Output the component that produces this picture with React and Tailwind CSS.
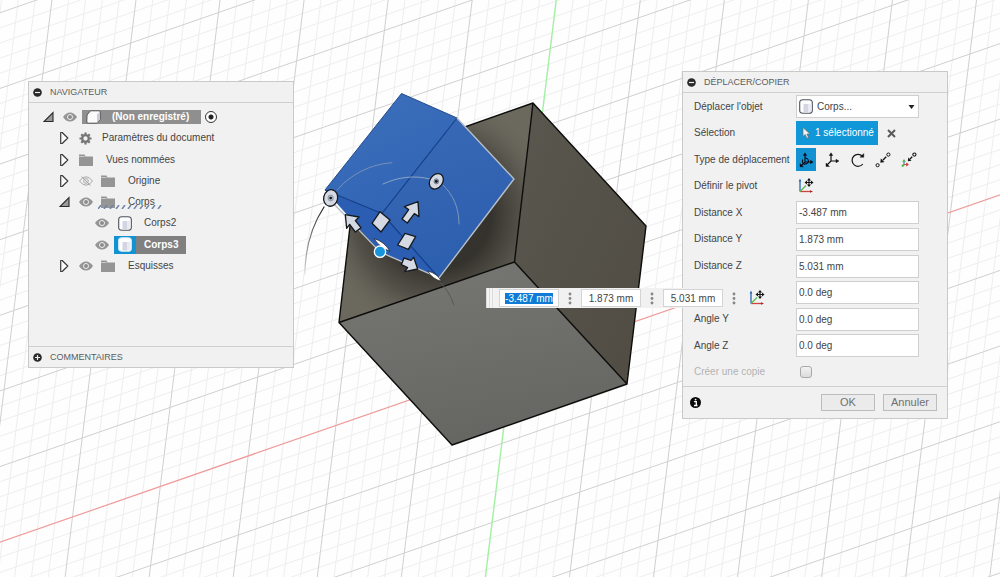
import { useEffect, useRef } from "react";

// Ground plane basis: one major grid cell along each axis, in scene units
const ORIGIN = [511.5, 364.5];
const U = [87.8, -30.5];
const V = [9.7, -79];
const REACH = 12;

const point = (u, v) => [
  ORIGIN[0] + u * U[0] + v * V[0],
  ORIGIN[1] + u * U[1] + v * V[1],
];

function gridPath(keep) {
  const parts = [];
  for (let n = -REACH * 5; n <= REACH * 5; n++) {
    if (!keep(n)) continue;
    const t = n / 5;
    parts.push(`M${point(t, -REACH)}L${point(t, REACH)}`);
    parts.push(`M${point(-REACH, t)}L${point(REACH, t)}`);
  }
  return parts.join("");
}

const minorGrid = gridPath((n) => n % 5 !== 0);
const majorGrid = gridPath((n) => n % 5 === 0 && n !== 0);

function Scene() {
  return (
    <svg
      className="absolute inset-0 h-full w-full"
      viewBox="0 0 1000 577"
      preserveAspectRatio="xMidYMid slice"
      aria-hidden="true"
    >
      <defs>
        <linearGradient id="front" x1="0" y1="0" x2="0.3" y2="1">
          <stop offset="0" stopColor="#777873" />
          <stop offset="1" stopColor="#666763" />
        </linearGradient>
        <linearGradient id="side" x1="0" y1="0" x2="1" y2="1">
          <stop offset="0" stopColor="#5a574e" />
          <stop offset="1" stopColor="#504c44" />
        </linearGradient>
        <linearGradient id="blueTop" x1="0" y1="0" x2="0.6" y2="1">
          <stop offset="0" stopColor="#3d70bb" />
          <stop offset="1" stopColor="#3164b4" />
        </linearGradient>
        <linearGradient id="blueSide" x1="0.3" y1="0" x2="0.6" y2="1">
          <stop offset="0" stopColor="#3869b5" />
          <stop offset="1" stopColor="#2c5eaf" />
        </linearGradient>
        <linearGradient id="fadeDown" x1="0" y1="0" x2="0" y2="1">
          <stop offset="0" stopColor="#222" />
          <stop offset="1" stopColor="#222" stopOpacity="0.1" />
        </linearGradient>
        <radialGradient id="shadow" gradientUnits="userSpaceOnUse" cx="437" cy="215" r="120">
          <stop offset="0.45" stopColor="#2b2924" stopOpacity="0.85" />
          <stop offset="0.7" stopColor="#3b3932" stopOpacity="0.5" />
          <stop offset="1" stopColor="#6b685e" stopOpacity="0" />
        </radialGradient>
      </defs>

      <rect width="1000" height="577" fill="#fefefe" />
      <path d={minorGrid} stroke="#eeeeee" strokeWidth="1" fill="none" />
      <path d={majorGrid} stroke="#d0d0d0" strokeWidth="1" fill="none" />
      <path d={`M${point(-REACH, 0)}L${point(REACH, 0)}`} stroke="#f09a9a" strokeWidth="1.2" />
      <path d={`M${point(0, -REACH)}L${point(0, REACH)}`} stroke="#a2f0a2" strokeWidth="1.4" />

      <path d="M533 103 514.5 262 339 322.5 357 165Z" fill="#6b685e" />
      <path d="M533 103 514.5 262 339 322.5 357 165Z" fill="url(#shadow)" />
      <path d="M533 103 646 226 627 384 514.5 262Z" fill="url(#side)" />
      <path d="M514.5 262 627 384 452 445 339 322.5Z" fill="url(#front)" />
      <path
        d="M357 165 533 103 646 226 627 384 452 445 339 322.5ZM514.5 262 533 103M514.5 262 627 384M514.5 262 339 322.5"
        fill="none"
        stroke="#0c0c0a"
        strokeWidth="1.4"
        strokeLinejoin="round"
      />

      <path d="M401.5 93.5 457 118 382 213.5 325 190Z" fill="url(#blueTop)" />
      <path d="M457 118 514 179 439 278 382 213.5Z" fill="url(#blueSide)" />
      <path d="M325 190 382 213.5 439 278 380 252Z" fill="#2b5eb2" />
      <path
        d="M457 118 382 213.5 439 278M382 213.5 325 190"
        fill="none"
        stroke="#143f8c"
        strokeWidth="1.2"
      />
      <path d="M457 118 401.5 93.5 325 190" fill="none" stroke="#234b8c" strokeWidth="1" />
      <path d="M457 118 514 179 439 278 380 252 333 203" fill="none" stroke="#b9bfc6" strokeWidth="1.4" />

      <g fill="none" strokeLinecap="round">
        <path d="M324 207C313 224 305 248 305 274" stroke="url(#fadeDown)" strokeWidth="1.2" />
        <path d="M337 190C350 175 370 164 392 162.7" stroke="#7791b8" strokeWidth="1" />
        <path d="M383 184C398 177 414 175 430 179" stroke="#8ba3c6" strokeWidth="1" />
        <path d="M443 185C453 195 459 207 459 224" stroke="#7d97bd" strokeWidth="1" />
        <path d="M441 283Q449 291 454 305" stroke="#575955" strokeWidth="1" />
      </g>

      <g
        transform="translate(300 85) scale(.33333)"
        fill="#d5d9e3"
        stroke="#16191f"
        strokeWidth="4"
        strokeLinejoin="round"
      >
        <ellipse cx="92" cy="339" rx="21" ry="25" transform="rotate(12 92 339)" />
        <ellipse cx="92" cy="339" rx="8" ry="9" fill="#aeb9c8" stroke="#77808c" strokeWidth="2" />
        <circle cx="92" cy="339" r="4" fill="#111" stroke="none" />
        <ellipse cx="409" cy="289" rx="19" ry="25" transform="rotate(35 409 289)" />
        <ellipse cx="409" cy="289" rx="7" ry="8" fill="#8594a9" stroke="#66707e" strokeWidth="2" />
        <circle cx="409" cy="289" r="4" fill="#111" stroke="none" />
        <path d="M136 389 177 396 166 407 183 428 166 441 149 418 140 430Z" />
        <path d="M354 350 357 395 343 386 322 414 306 402 326 374 313 365Z" />
        <path d="M353 552 314 560 323 548 304 539 312 519 333 526 341 517Z" />
        <path d="M240 380 270 405 243 441 216 415Z" />
        <path d="M315 445 347 455 325 493 293 480Z" />
        <path d="M222 461Q253 469 270 499Q240 488 222 461Z" fill="#fff" strokeWidth="2" />
        <path d="M383 558Q412 565 424 589Q397 582 383 558Z" fill="#fff" strokeWidth="2" />
        <circle cx="240" cy="500" r="17" fill="#1695dc" stroke="#fff" strokeWidth="4" />
      </g>
    </svg>
  );
}

function RoundIcon({ plus }) {
  return (
    <svg width="9" height="9" viewBox="0 0 9 9" aria-hidden="true">
      <circle cx="4.5" cy="4.5" r="4.3" fill="#2a2a2a" />
      <path d={plus ? "M2 4.5H7M4.5 2V7" : "M2 4.5H7"} stroke="#f2f2f2" strokeWidth="1.2" />
    </svg>
  );
}

function PanelHeader({ title, plus }) {
  return (
    <h2 className="flex h-5 items-center gap-2 text-[9px] text-[#5c5c5c]">
      <button type="button" aria-label={plus ? "Développer" : "Réduire"} className="ml-1">
        <RoundIcon plus={plus} />
      </button>
      {title}
    </h2>
  );
}

function Toggle({ open }) {
  return (
    <svg width="11" height="14" viewBox="0 0 11 14" aria-hidden="true">
      {open ? (
        <path d="M10 2.5V11.5H1Z" fill="#9a9a9a" stroke="#2b2b2b" strokeWidth="1.1" />
      ) : (
        <path
          d="M1.7 1.5V12.5H3.2L8.8 7 3.2 1.5Z"
          fill="#fafafa"
          stroke="#3a3a3a"
          strokeWidth="1.2"
          strokeLinejoin="round"
        />
      )}
    </svg>
  );
}

function Eye({ hidden }) {
  return (
    <svg width="14" height="10" viewBox="0 0 14 10" aria-hidden="true">
      {hidden ? (
        <g fill="none" stroke="#a6a6a6">
          <path d="M0.5 5Q3.5 0.8 7 0.8T13.5 5Q10.5 9.2 7 9.2T0.5 5Z" />
          <circle cx="7" cy="5" r="2.3" />
          <path d="M2.5 0.5 11.5 9.5" />
        </g>
      ) : (
        <g>
          <path d="M0 5Q3 0.5 7 0.5T14 5Q11 9.5 7 9.5T0 5Z" fill="#959595" />
          <circle cx="7" cy="5" r="2.5" fill="#8b8b8b" stroke="#efefef" strokeWidth="1" />
        </g>
      )}
    </svg>
  );
}

function Folder() {
  return (
    <svg width="14" height="12" viewBox="0 0 14 12" aria-hidden="true">
      <path d="M0 0.5H5.5L6.5 2.5H14V12H0Z" fill="#959595" />
      <path d="M0 2.5H5.5" stroke="#d6d6d6" strokeWidth="0.8" />
    </svg>
  );
}

function Gear() {
  return (
    <svg width="13" height="13" viewBox="-6.5 -6.5 13 13" aria-hidden="true">
      <circle r="3.3" fill="none" stroke="#757575" strokeWidth="2.3" />
      {[0, 45, 90, 135].map((angle) => (
        <path
          key={angle}
          d="M0-6V-4M0 4V6"
          stroke="#757575"
          strokeWidth="2.2"
          transform={`rotate(${angle})`}
        />
      ))}
    </svg>
  );
}

function BodyIcon({ outline = "#4c4f5c" }) {
  return (
    <svg width="14" height="15" viewBox="0 0 14 15" aria-hidden="true">
      <path
        d="M0.7 3.5Q0.7 0.7 4 0.7H10Q13.3 0.7 13.3 3.5V11.5Q13.3 14.3 10 14.3H4Q0.7 14.3 0.7 11.5Z"
        fill="#fdfdfd"
        stroke={outline}
        strokeWidth="1.1"
      />
      <path d="M4.5 5H9.5V13.5H4.5Z" fill="#d3d6e2" />
      <path d="M9.5 5H12.5V11.5Q12 13.5 9.5 13.5Z" fill="#e9ebf2" />
    </svg>
  );
}

function ComponentIcon() {
  return (
    <svg width="15" height="14" viewBox="0 0 15 14" aria-hidden="true">
      <path
        d="M1 5 4.5 0.8H13Q14.3 0.8 14.3 2V9.5L11 13.2H2.3Q0.8 13.2 0.8 12Z"
        fill="#fbfbfb"
        stroke="#54565c"
        strokeWidth="1"
      />
      <path d="M11 4.5 14 1.5V9.5L11 13Z" fill="#c9ccd5" />
    </svg>
  );
}

function PivotIcon() {
  return (
    <svg width="16" height="16" viewBox="0 0 16 16" fill="none" aria-hidden="true">
      <path d="M2 13.5V2" stroke="#2b67b4" strokeWidth="1.3" />
      <path d="M0.7 3.5 2 0.5 3.3 3.5Z" fill="#2b67b4" />
      <path d="M2 13.5H13" stroke="#d14343" strokeWidth="1.3" />
      <path d="M12 12.2 15 13.5 12 14.8Z" fill="#a92222" />
      <path d="M2 13.5 8 7.5" stroke="#58bb48" strokeWidth="1.3" />
      <path d="M7.5 4.5H14.5M11 1V8" stroke="#151515" strokeWidth="1.1" />
      <path
        d="M11 0 13 2.5H9ZM11 9 13 6.5H9ZM6.5 4.5 9 2.5V6.5ZM15.5 4.5 13 2.5V6.5Z"
        fill="#151515"
      />
    </svg>
  );
}

const moveIcons = {
  free: (
    <g stroke="#0b0b16" strokeWidth="1.1" fill="none">
      <path d="M7 10V3M7 10H13M7 10 3 14" />
      <path d="M5.2 3.5 7 0.8 8.8 3.5ZM12.5 8.2 15.2 10 12.5 11.8ZM2 11.5V14.8H5.3Z" fill="#0b0b16" strokeWidth="0.4" />
      <path d="M7 6Q10.5 6 10.5 10Q9 12.5 5.5 12" />
      <path d="M4.8 7.5Q4 9.5 4.8 11.5" />
    </g>
  ),
  translate: (
    <g stroke="#111" strokeWidth="1.2" fill="none">
      <path d="M7 9V3M7 9H13M7 9 3 13" />
      <path d="M5.2 3.5 7 0.8 8.8 3.5ZM12 7.2 15 9 12 10.8ZM2 11V14.5H5.5Z" fill="#111" strokeWidth="0.4" />
    </g>
  ),
  rotate: (
    <g fill="none" stroke="#161616" strokeWidth="1.2">
      <path d="M12.3 4A6 6 0 1 0 12.8 12" />
      <path d="M10 5.3H13.8V1.5Z" fill="#161616" strokeWidth="0.4" />
    </g>
  ),
  pointToPoint: (
    <g fill="none" stroke="#161616" strokeWidth="1">
      <circle cx="2.6" cy="13.2" r="1.6" />
      <circle cx="13.4" cy="2.6" r="1.6" />
      <path d="M11.2 4.8 8 8" strokeWidth="1.4" />
      <path d="M5.5 10.5 6 6.8 9.2 10Z" fill="#161616" strokeWidth="0.3" />
    </g>
  ),
  pointToPosition: (
    <g fill="none" strokeWidth="1.1">
      <circle cx="13.4" cy="2.6" r="1.6" stroke="#161616" />
      <path d="M11.2 4.8 9 7" stroke="#161616" strokeWidth="1.4" />
      <path d="M6.8 9.2 7.3 5.5 10.5 8.7Z" fill="#161616" />
      <path d="M3 12.5V9" stroke="#3b78c4" />
      <path d="M3 12.5H6.5M5.3 11 7 12.5 5.3 14" stroke="#d14343" />
      <path d="M3 12.5 1 14.5" stroke="#45b545" strokeWidth="1.8" />
      <path d="M1.8 10 3 8 4.2 10" stroke="#45b545" />
    </g>
  ),
};

const moveTypes = [
  { id: "free", label: "Déplacement libre" },
  { id: "translate", label: "Translation" },
  { id: "rotate", label: "Rotation" },
  { id: "pointToPoint", label: "Point à point" },
  { id: "pointToPosition", label: "Point à position" },
];

function TreeRow({ indent = "pl-[30px]", toggle, eye, children }) {
  return (
    <li className={`flex h-5 items-center ${indent}`}>
      {toggle && (
        <button type="button" aria-label="Afficher le contenu" className="mr-[9px]">
          <Toggle open={toggle === "open"} />
        </button>
      )}
      {eye && (
        <button type="button" aria-label="Visibilité">
          <Eye hidden={eye === "off"} />
        </button>
      )}
      {children}
    </li>
  );
}

function FolderLabel({ name, className = "ml-2" }) {
  return (
    <span className={`flex items-center gap-[13px] ${className}`}>
      <Folder />
      {name}
    </span>
  );
}

function Navigator() {
  return (
    <section className="mt-[10px] w-[266px] border border-[#c9c9c9] bg-[#f1f1f1]">
      <PanelHeader title="NAVIGATEUR" />
      <div className="min-h-[245px] border-y border-[#d0d0d0] pt-1">
        <ul className="flex min-h-[169px] flex-col justify-between">
          <TreeRow indent="pl-[14px]" toggle="open" eye="on">
            <span className="ml-[5px] flex h-[14px] items-center bg-[#8f8f8f] pr-3 font-bold text-white">
              <span className="flex w-[22px] justify-center">
                <ComponentIcon />
              </span>
              <span className="pl-2">(Non enregistré)</span>
            </span>
            <input
              type="radio"
              name="active-component"
              aria-label="Activer le composant"
              defaultChecked
              className="ml-1 size-3 appearance-none rounded-full border border-[#333] bg-[radial-gradient(circle,#222_0_2px,#fff_3px)]"
            />
          </TreeRow>
          <TreeRow toggle="closed">
            <span className="flex items-center gap-[10px]">
              <Gear />
              Paramètres du document
            </span>
          </TreeRow>
          <TreeRow toggle="closed">
            <FolderLabel name="Vues nommées" className="ml-0" />
          </TreeRow>
          <TreeRow toggle="closed" eye="off">
            <FolderLabel name="Origine" />
          </TreeRow>
          <TreeRow toggle="open" eye="on">
            <span className="relative">
              <FolderLabel name="Corps" />
              <svg className="absolute top-[9px] left-[5px]" width="64" height="4" aria-hidden="true">
                {Array.from({ length: 11 }, (_, n) => (
                  <path key={n} d={`M${n * 6} 4L${n * 6 + 3} 0`} stroke="#6f83a8" strokeWidth="1.5" />
                ))}
              </svg>
            </span>
          </TreeRow>
          <TreeRow indent="pl-[66px]" eye="on">
            <span className="ml-[5px] flex items-center">
              <span className="flex w-[22px] justify-center">
                <BodyIcon />
              </span>
              <span className="pl-2">Corps2</span>
            </span>
          </TreeRow>
          <TreeRow indent="pl-[66px]" eye="on">
            <span className="ml-[5px] flex h-[18px] items-center bg-[#808080] pr-2 font-bold text-white">
              <span className="flex h-full w-[22px] items-center justify-center bg-[#1292d2]">
                <BodyIcon outline="#d9edf8" />
              </span>
              <span className="pl-2">Corps3</span>
            </span>
          </TreeRow>
          <TreeRow toggle="closed" eye="on">
            <FolderLabel name="Esquisses" />
          </TreeRow>
        </ul>
      </div>
      <PanelHeader title="COMMENTAIRES" plus />
    </section>
  );
}

function Field({ id, label, muted, children }) {
  return (
    <div className="flex h-[23px] items-center">
      <label htmlFor={id} className={`w-[102px] shrink-0 ${muted ? "text-[#b3b3b3]" : ""}`}>
        {label}
      </label>
      {children}
    </div>
  );
}

const values = [
  { id: "dx", label: "Distance X", value: "-3.487 mm" },
  { id: "dy", label: "Distance Y", value: "1.873 mm" },
  { id: "dz", label: "Distance Z", value: "5.031 mm" },
  { id: "ax", label: "Angle X", value: "0.0 deg" },
  { id: "ay", label: "Angle Y", value: "0.0 deg" },
  { id: "az", label: "Angle Z", value: "0.0 deg" },
];

function MoveDialog() {
  return (
    <section className="w-[266px] border border-[#c9c9c9] bg-[#f1f1f1]">
      <PanelHeader title="DÉPLACER/COPIER" />
      <div className="border-y border-[#d0d0d0] py-[2px] pr-7 pl-[11px]">
        <div className="flex min-h-[289px] flex-col justify-between">
          <Field id="object" label="Déplacer l'objet">
            <div className="relative min-w-0 flex-1">
              <select
                id="object"
                className="h-[23px] w-full appearance-none border border-[#cfcfcf] bg-white pl-5"
              >
                <option>Corps...</option>
              </select>
              <span className="pointer-events-none absolute inset-0 flex items-center justify-between pr-1 pl-[3px]">
                <BodyIcon />
                <svg width="7" height="4" viewBox="0 0 7 4" aria-hidden="true">
                  <path d="M0.5 0H6.5L3.5 4Z" fill="#222" />
                </svg>
              </span>
            </div>
          </Field>
          <Field id="selection" label="Sélection">
            <button
              id="selection"
              type="button"
              className="flex h-6 items-center gap-1 bg-[#1097d8] pr-1 pl-[6px] text-white"
            >
              <svg width="9" height="12" viewBox="0 0 9 12" aria-hidden="true">
                <path
                  d="M1 0.5V9.5L3.2 7.5 4.8 11.3 6.5 10.5 4.9 7H8Z"
                  fill="#f3f3f3"
                  stroke="#6c6c6c"
                  strokeWidth="0.7"
                />
              </svg>
              1 sélectionné
            </button>
            <button type="button" aria-label="Effacer la sélection" className="ml-[9px]">
              <svg width="9" height="9" viewBox="0 0 9 9" aria-hidden="true">
                <path d="M1 1 8 8M8 1 1 8" stroke="#5a5a5a" strokeWidth="2" />
              </svg>
            </button>
          </Field>
          <Field id="free" label="Type de déplacement">
            <div className="flex min-w-0 flex-1 justify-between">
              {moveTypes.map(({ id, label }) => (
                <button
                  key={id}
                  id={id}
                  type="button"
                  aria-label={label}
                  className={`flex h-[23px] w-5 items-center justify-center ${id === "free" ? "bg-[#1292d2]" : ""}`}
                >
                  <svg width="16" height="16" viewBox="0 0 16 16" aria-hidden="true">
                    {moveIcons[id]}
                  </svg>
                </button>
              ))}
            </div>
          </Field>
          <Field id="pivot" label="Définir le pivot">
            <button id="pivot" type="button" aria-label="Définir le pivot" className="ml-[2px]">
              <PivotIcon />
            </button>
          </Field>
          {values.map(({ id, label, value }) => (
            <Field key={id} id={id} label={label}>
              <input
                id={id}
                type="text"
                defaultValue={value}
                className="h-[23px] min-w-0 flex-1 border border-[#cfcfcf] bg-white px-[2px] outline-none"
              />
            </Field>
          ))}
          <Field id="copy" label="Créer une copie" muted>
            <input
              id="copy"
              type="checkbox"
              disabled
              className="ml-1 size-3 appearance-none rounded-[3px] border border-[#a9a9a9] bg-linear-to-b from-[#f2f2f2] to-[#dcdcdc]"
            />
          </Field>
        </div>
      </div>
      <div className="flex h-[31px] items-center gap-2 pr-[10px] pl-[7px] text-[11px] text-[#707070]">
        <button type="button" aria-label="Informations" className="mr-auto">
          <svg width="11" height="11" viewBox="0 0 11 11" aria-hidden="true">
            <circle cx="5.5" cy="5.5" r="5.5" fill="#0a0a0a" />
            <path d="M4 4.7H6.3V8.3M4 8.5H7.5" stroke="#fff" strokeWidth="1.3" fill="none" />
            <circle cx="5.6" cy="2.6" r="0.9" fill="#fff" />
          </svg>
        </button>
        <button type="button" className="h-[17px] w-[54px] border border-[#bcbcbc] bg-[#ebebeb] leading-[15px]">
          OK
        </button>
        <button type="button" className="h-[17px] w-[54px] border border-[#bcbcbc] bg-[#ebebeb] leading-[15px]">
          Annuler
        </button>
      </div>
    </section>
  );
}

function Dots() {
  return (
    <svg width="4" height="13" viewBox="0 0 4 13" fill="#858585" aria-hidden="true">
      <circle cx="2" cy="2" r="1.4" />
      <circle cx="2" cy="6.5" r="1.4" />
      <circle cx="2" cy="11" r="1.4" />
    </svg>
  );
}

function FloatingInputs() {
  const first = useRef(null);

  useEffect(() => {
    first.current.focus();
    first.current.select();
  }, []);

  return (
    <div className="absolute top-[288px] left-[486px] flex h-5 items-center gap-[9px] bg-[#f1f1f1] pr-1">
      <span className="-mr-[5px] h-full w-[9px] bg-[repeating-linear-gradient(90deg,#dcdcdc_0_1px,#f4f4f4_1px_3px)]" />
      {values.slice(0, 3).map(({ id, label, value }, index) => (
        <div key={id} className="flex items-center gap-[9px]">
          <input
            ref={index === 0 ? first : null}
            type="text"
            aria-label={label}
            defaultValue={value}
            className="h-[18px] w-[60px] border border-[#d4d4d4] bg-white text-center outline-none selection:bg-[#0f7bd5] selection:text-white"
          />
          <Dots />
        </div>
      ))}
      <button type="button" aria-label="Définir le pivot" className="ml-1">
        <PivotIcon />
      </button>
    </div>
  );
}

export default function App() {
  return (
    <main className="relative min-h-screen overflow-hidden bg-white font-['Liberation_Sans',Arial,sans-serif] text-[10px] leading-none text-[#444]">
      <Scene />
      <div className="relative flex items-start justify-between pt-[71px] pr-[52px] pl-7">
        <Navigator />
        <MoveDialog />
      </div>
      <FloatingInputs />
    </main>
  );
}
